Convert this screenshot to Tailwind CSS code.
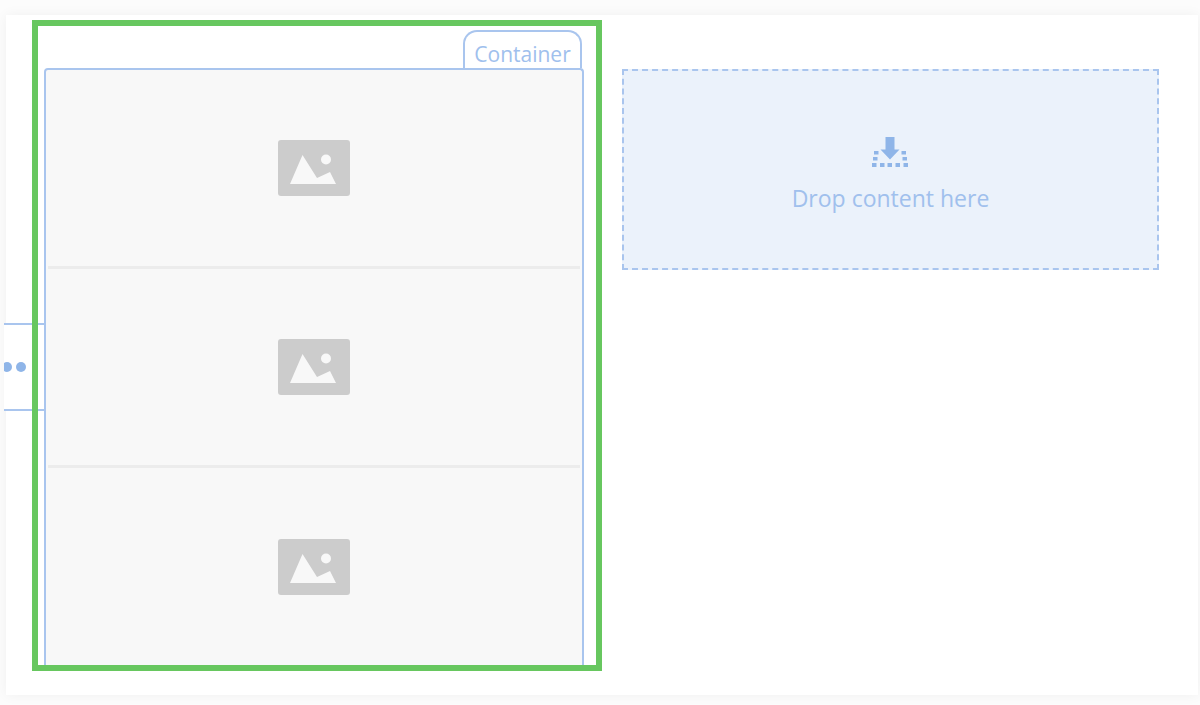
<!DOCTYPE html>
<html lang="en">
<head>
  <meta charset="UTF-8" />
  <meta name="viewport" content="width=device-width, initial-scale=1.0" />
  <title>Layout Editor</title>
  <script src="https://cdn.jsdelivr.net/npm/@tailwindcss/browser@4"></script>
</head>
<body class="bg-[#fcfcfc] font-['Open_Sans','Noto_Sans',sans-serif] text-[#a0c0ed]">

  <!-- Editor canvas -->
  <main class="relative mt-[15px] mb-[10px] ml-[6px] mr-[2px] bg-white pt-[5px] pb-6 pl-[26px] pr-[39px] shadow-[0_0_12px_#0000000d] grid grid-cols-[570fr_537fr] gap-5 items-start">

    <!-- Row handle, partly outside the canvas -->
    <button type="button" aria-label="More options" class="absolute top-[308px] -left-[2px] w-[40px] h-[88px] bg-white border-y-2 border-[#a9c5ee] flex items-center">
      <svg class="w-6 h-3" viewBox="0 0 24 12" fill="#8fb5e8">
        <circle cx="3" cy="6" r="5" />
        <circle cx="17" cy="6" r="5" />
      </svg>
    </button>

    <!-- Selected container -->
    <section class="relative border-6 border-[#67c75f] pl-[6px] pt-1 pr-3">
      <div class="flex justify-end pr-[2px]">
        <h2 class="w-[119px] h-[38px] pt-2 border-2 border-b-0 border-[#a9c5ee] rounded-t-[14px] text-center text-[21px] leading-[28px]">Container</h2>
      </div>
      <ul class="border-2 border-b-0 border-[#a9c5ee] rounded-t-sm bg-[#f8f8f8] px-[2px] divide-y-3 divide-[#ececec]">
        <li class="h-[199px] flex items-center justify-center">
          <svg class="w-18 h-14" viewBox="0 0 72 56">
            <rect width="72" height="56" rx="3" fill="#cccccc" />
            <path d="M12 44 L24.500 15 L39 38 L52 32 L58 44 Z" fill="#f8f8f8" />
            <circle cx="48" cy="19.500" r="5" fill="#f8f8f8" />
          </svg>
        </li>
        <li class="h-[199px] flex items-center justify-center">
          <svg class="w-18 h-14" viewBox="0 0 72 56">
            <rect width="72" height="56" rx="3" fill="#cccccc" />
            <path d="M12 44 L24.500 15 L39 38 L52 32 L58 44 Z" fill="#f8f8f8" />
            <circle cx="48" cy="19.500" r="5" fill="#f8f8f8" />
          </svg>
        </li>
        <li class="h-[197px] flex items-center justify-center">
          <svg class="w-18 h-14" viewBox="0 0 72 56">
            <rect width="72" height="56" rx="3" fill="#cccccc" />
            <path d="M12 44 L24.500 15 L39 38 L52 32 L58 44 Z" fill="#f8f8f8" />
            <circle cx="48" cy="19.500" r="5" fill="#f8f8f8" />
          </svg>
        </li>
      </ul>
    </section>

    <!-- Empty drop zone -->
    <section class="mt-[49px] h-[201px] pt-3 border-2 border-dashed border-[#a9c5ee] bg-[#ebf2fb] flex flex-col items-center justify-center gap-[14px]">
      <svg class="w-[38px] h-[31px]" viewBox="1 0 38 31" fill="#8fb5e8">
        <path d="M14.500 0 H23.500 V12.500 H28.500 L19 22.500 L9.500 12.500 H14.500 Z" />
        <path d="M3 14 h4.500 v3.500 h-4.500 z M2 20 h4.500 v3.500 h-4.500 z M30.500 14 h4.500 v3.500 h-4.500 z M31.500 20 h4.500 v3.500 h-4.500 z" />
        <path d="M1 26 h4.500 v4 h-4.500 z M9 26 h4.500 v4 h-4.500 z M16.500 26 h4.500 v4 h-4.500 z M24.500 26 h4.500 v4 h-4.500 z M32.500 26 h4.500 v4 h-4.500 z" />
      </svg>
      <p class="text-[23px] leading-[32px]">Drop content here</p>
    </section>
  </main>

</body>
</html>
